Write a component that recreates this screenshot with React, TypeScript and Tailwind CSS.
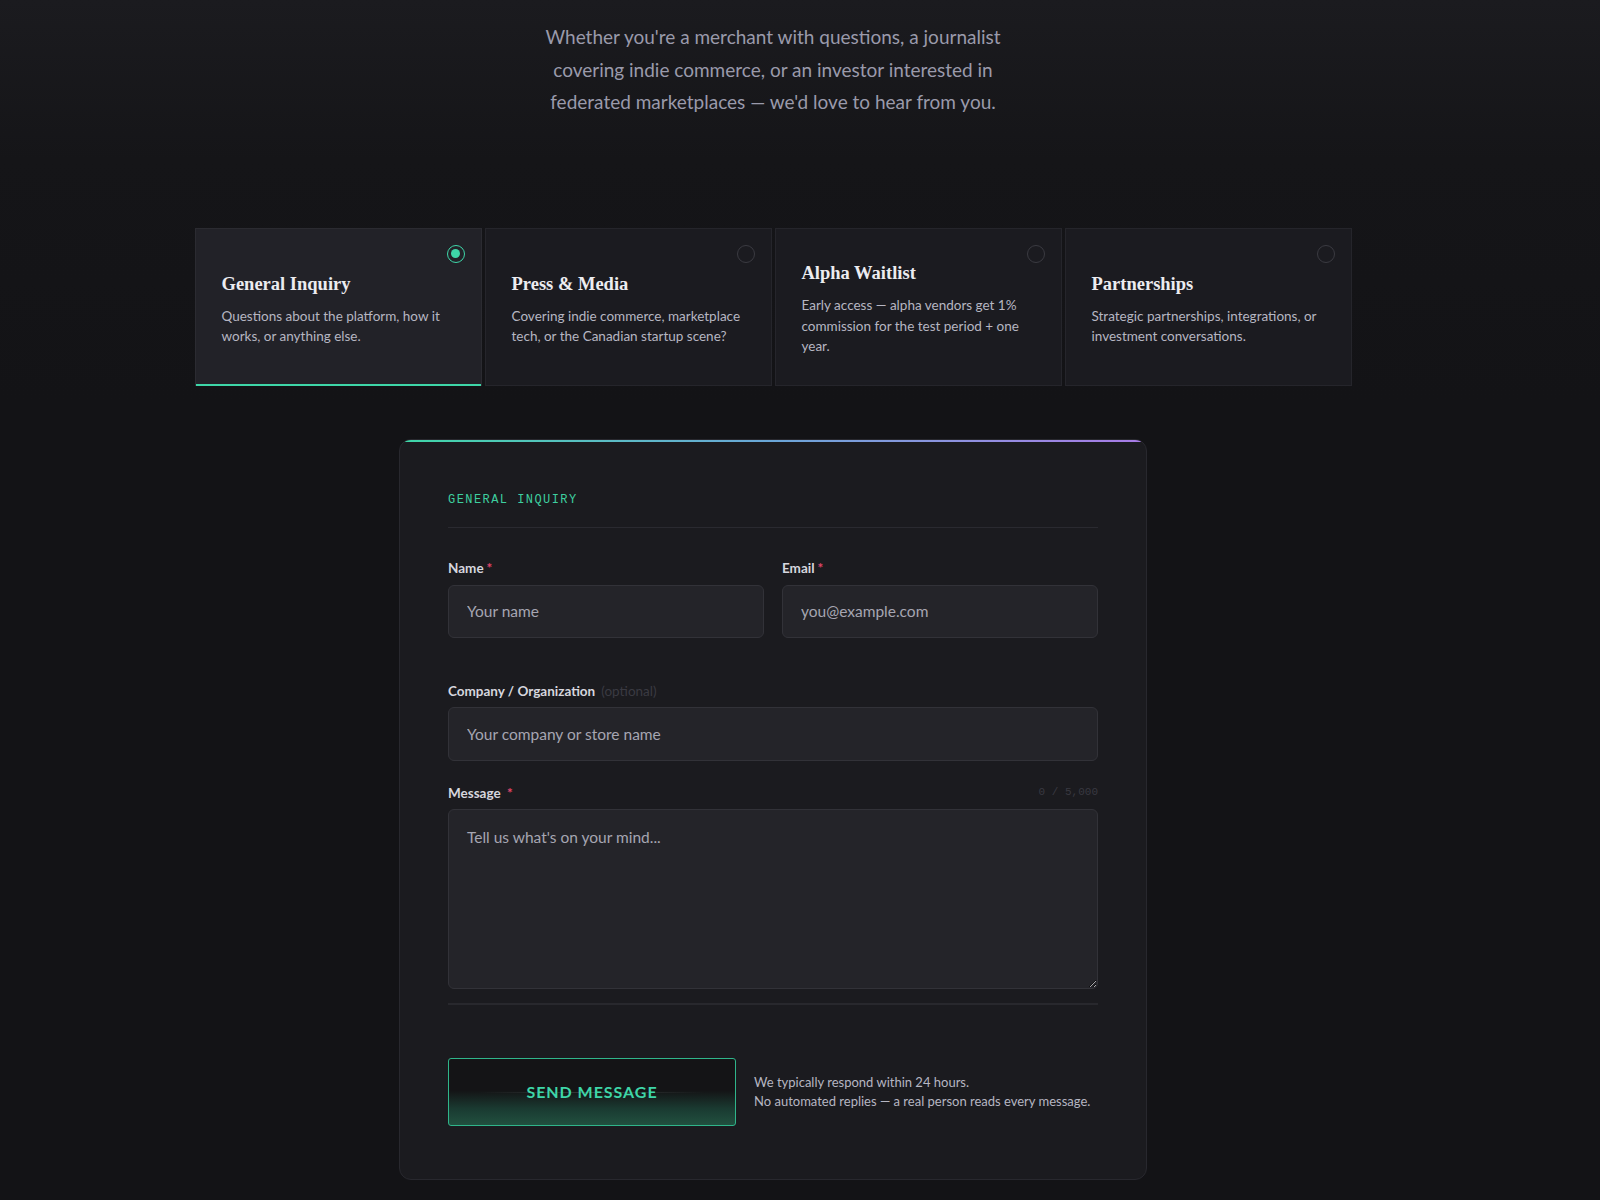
import { useState } from "react";

type Topic = {
  id: string;
  title: string;
  desc: string;
  label: string;
};

const topics: Topic[] = [
  {
    id: "general",
    title: "General Inquiry",
    desc: "Questions about the platform, how it works, or anything else.",
    label: "GENERAL INQUIRY",
  },
  {
    id: "press",
    title: "Press & Media",
    desc: "Covering indie commerce, marketplace tech, or the Canadian startup scene?",
    label: "PRESS & MEDIA",
  },
  {
    id: "alpha",
    title: "Alpha Waitlist",
    desc: "Early access \u2014 alpha vendors get 1% commission for the test period + one year.",
    label: "ALPHA WAITLIST",
  },
  {
    id: "partners",
    title: "Partnerships",
    desc: "Strategic partnerships, integrations, or investment conversations.",
    label: "PARTNERSHIPS",
  },
];

const sans = "font-['Lato','Noto_Sans',sans-serif]";
const serif = "font-['Liberation_Serif','DejaVu_Serif',serif]";
const mono = "font-['Liberation_Mono','DejaVu_Sans_Mono',monospace]";

function TopicCard({
  topic,
  active,
  onSelect,
}: {
  topic: Topic;
  active: boolean;
  onSelect: () => void;
}) {
  return (
    <button
      type="button"
      onClick={onSelect}
      className={`relative flex h-[158px] flex-col justify-center border px-[26px] pt-[4px] text-left ${
        active
          ? "border-[#2b2b31] bg-[#222228]"
          : "border-[#25252b] bg-[#1b1b20]"
      }`}
    >
      <span
        className={`absolute right-[16px] top-[16px] flex h-[18px] w-[18px] items-center justify-center rounded-full border-[1.5px] ${
          active ? "border-[#3ed6a8]" : "border-[#3a3a41]"
        }`}
      >
        {active && <span className="h-[9px] w-[9px] rounded-full bg-[#3ed6a8]" />}
      </span>
      <span className={`${serif} text-[18.5px] font-bold leading-[26px] text-[#ececf0]`}>
        {topic.title}
      </span>
      <span className={`${sans} mt-[9px] text-[13.5px] leading-[20.5px] text-[#b6b6c2]`}>
        {topic.desc}
      </span>
      {active && (
        <span className="absolute -bottom-px left-0 right-0 h-[2px] bg-[#3ed6a8]" />
      )}
    </button>
  );
}

function Label({ text, required, extra }: { text: string; required?: boolean; extra?: string }) {
  return (
    <label className={`${sans} block text-[13.5px] font-bold leading-[18px] text-[#d6d6de]`}>
      {text}
      {required && <span className="ml-[3px] text-[#e0456a]">*</span>}
      {extra && <span className="ml-[6px] font-normal text-[#3a3a42]">{extra}</span>}
    </label>
  );
}

const inputCls = `${sans} block w-full rounded-[6px] border border-[#323238] bg-[#242429] px-[18px] text-[15.5px] text-[#e4e4ea] placeholder:text-[#a6a6b2] outline-none`;

export default function App() {
  const [selected, setSelected] = useState("general");
  const [message, setMessage] = useState("");
  const current = topics.find((t) => t.id === selected) ?? topics[0];

  return (
    <div className={`${sans} min-h-[1200px] bg-[linear-gradient(180deg,#1b1b1f_0px,#151518_160px,#131316_400px)] pr-[54px]`}>
      <div className="flex flex-col items-center pt-[21px] pb-[21px]">
        <p className="w-[480px] text-center text-[19px] leading-[32.5px] text-[#9a9aab]">
          Whether you're a merchant with questions, a journalist covering indie commerce, or an
          investor interested in federated marketplaces — we'd love to hear from you.
        </p>

        <div className="mt-[109px] grid w-[1157px] grid-cols-4 gap-[3px]">
          {topics.map((t) => (
            <TopicCard
              key={t.id}
              topic={t}
              active={t.id === selected}
              onSelect={() => setSelected(t.id)}
            />
          ))}
        </div>

        <form
          onSubmit={(e) => e.preventDefault()}
          className="relative mt-[53px] w-[748px] overflow-hidden rounded-[12px] border border-[#28282e] bg-[#1b1b1f] px-12 pt-[45px] pb-[53px]"
        >
          <div className="absolute left-[5px] right-[5px] top-0 h-[2px] bg-gradient-to-r from-[#3ed6a8] via-[#6aa6d8] to-[#a77be6]" />

          <div className="border-b border-[#2a2a30] pb-[18px]">
            <span className={`${mono} text-[12px] leading-[16px] tracking-[0.12em] text-[#3ecf9f]`}>
              {current.label}
            </span>
          </div>

          <div className="mt-[31px] grid grid-cols-2 gap-[18px]">
            <div>
              <Label text="Name" required />
              <input className={`${inputCls} mt-[8px] h-[53px]`} placeholder="Your name" />
            </div>
            <div>
              <Label text="Email" required />
              <input className={`${inputCls} mt-[8px] h-[53px]`} placeholder="you@example.com" />
            </div>
          </div>

          <div className="mt-[44px]">
            <Label text="Company / Organization" extra="(optional)" />
            <input className={`${inputCls} mt-[7px] h-[54px]`} placeholder="Your company or store name" />
          </div>

          <div className="mt-[23px]">
            <div className="flex items-center justify-between">
              <Label text="Message " required />
              <span className={`${mono} text-[11px] text-[#393941]`}>
                {message.length} / 5,000
              </span>
            </div>
            <textarea
              value={message}
              onChange={(e) => setMessage(e.target.value)}
              maxLength={5000}
              className={`${inputCls} mt-[7px] h-[180px] pt-[16px] leading-[22px]`}
              placeholder="Tell us what's on your mind..."
            />
          </div>

          <div className="mt-[14px] h-[2px] bg-[#28282d]" />

          <div className="mt-[53px] flex items-center gap-[18px]">
            <button
              type="submit"
              className="relative flex h-[68px] w-[288px] items-center justify-center overflow-hidden rounded-[3px] border border-[#2fb58a] bg-[linear-gradient(180deg,#141416_0%,#141416_48%,#1a3a31_75%,#21503f_100%)]"
            >
              <span className="absolute left-[30px] right-[30px] top-1/2 h-px bg-gradient-to-r from-transparent via-white/15 to-transparent" />
              <span className="relative text-[16px] font-bold tracking-[0.06em] text-[#3ed6a8]">
                SEND MESSAGE
              </span>
            </button>
            <div className="text-[13px] leading-[19px] text-[#b6b6c2]">
              <p>We typically respond within 24 hours.</p>
              <p>No automated replies — a real person reads every message.</p>
            </div>
          </div>
        </form>
      </div>
    </div>
  );
}
